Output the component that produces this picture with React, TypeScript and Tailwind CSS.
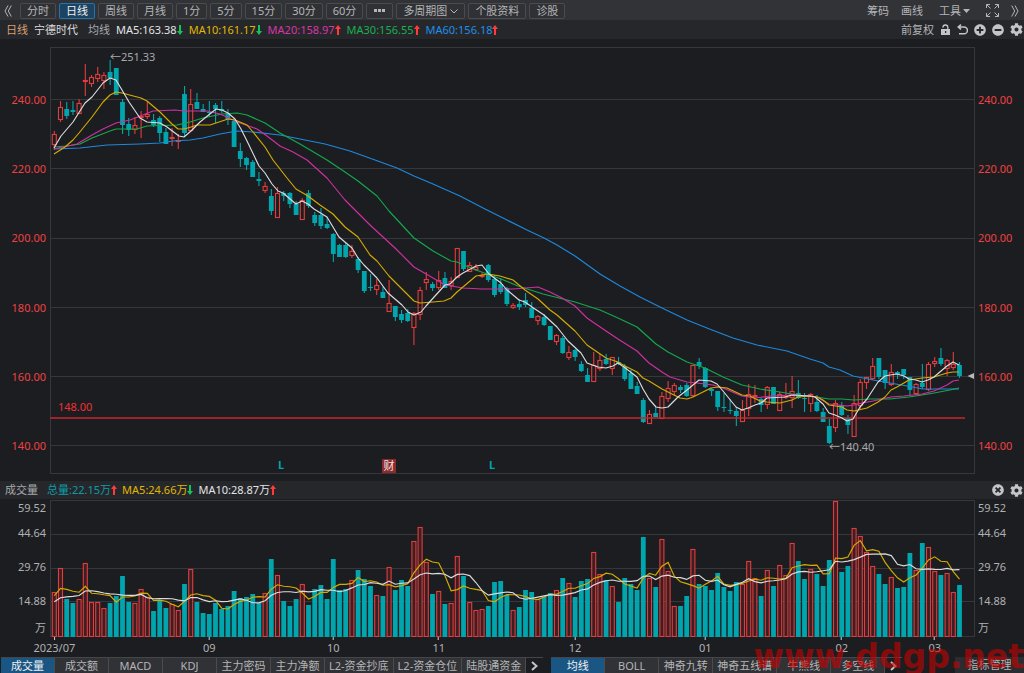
import { useState } from "react";
import { FaCog, FaMinusCircle, FaPlusCircle, FaTimesCircle } from "react-icons/fa";
import clsx from "clsx";

// [high, body top, body bottom, low, volume top], all in chart units (y grows downwards)
type Candle = [up: 0 | 1, high: number, top: number, bottom: number, low: number, volume: number];
type Point = [number, number];

const CANDLES: Candle[] = [
  [1, 131, 134, 145, 150, 592], [1, 101, 107, 120, 122, 568], [0, 102, 109, 116, 119, 599],
  [0, 101, 110, 112, 115, 603], [1, 99, 103, 114, 114, 599], [1, 64, 80, 82, 96, 563],
  [1, 75, 77, 84, 87, 602], [1, 67, 74, 79, 82, 602], [1, 72, 75, 81, 89, 608],
  [0, 60, 72, 78, 85, 603], [0, 68, 68, 95, 95, 596], [0, 99, 102, 125, 134, 576],
  [0, 118, 124, 130, 136, 602], [1, 117, 125, 130, 134, 603], [1, 111, 116, 118, 138, 589],
  [1, 102, 114, 117, 119, 597], [0, 114, 120, 125, 127, 611], [0, 116, 118, 133, 142, 601],
  [0, 128, 132, 144, 144, 608], [1, 128, 137, 139, 146, 604], [1, 134, 140, 142, 149, 610],
  [0, 86, 94, 133, 137, 584], [1, 89, 104, 131, 132, 569], [0, 93, 102, 109, 109, 602],
  [0, 104, 109, 112, 112, 613], [0, 101, 112, 113, 117, 614], [0, 103, 105, 109, 123, 603],
  [0, 101, 109, 111, 113, 609], [0, 109, 113, 119, 125, 606], [0, 120, 121, 147, 147, 591],
  [0, 143, 151, 159, 167, 598], [0, 157, 158, 165, 170, 597], [0, 160, 162, 177, 177, 594],
  [0, 172, 179, 181, 186, 603], [1, 182, 186, 191, 193, 593], [0, 189, 196, 211, 215, 559],
  [1, 187, 193, 218, 218, 575], [0, 191, 193, 196, 201, 601], [0, 192, 193, 204, 208, 606],
  [0, 201, 204, 215, 215, 599], [1, 198, 200, 220, 220, 584], [0, 190, 193, 206, 208, 605],
  [0, 212, 215, 223, 226, 589], [0, 208, 215, 226, 229, 585], [0, 217, 224, 228, 229, 599],
  [0, 233, 234, 254, 262, 559], [0, 244, 245, 257, 257, 590], [0, 243, 245, 257, 258, 589],
  [1, 245, 251, 256, 258, 580], [0, 257, 259, 270, 273, 570], [0, 271, 271, 291, 293, 579],
  [0, 274, 287, 288, 291, 586], [1, 279, 285, 290, 295, 595], [0, 287, 292, 298, 298, 596],
  [1, 280, 303, 312, 312, 567], [0, 306, 306, 317, 321, 590], [0, 310, 314, 320, 323, 580],
  [0, 309, 313, 321, 322, 586], [1, 312, 313, 328, 345, 541], [1, 287, 290, 315, 320, 527],
  [1, 272, 279, 283, 290, 562], [0, 282, 284, 288, 291, 594], [1, 271, 280, 288, 290, 591],
  [0, 272, 278, 288, 288, 604], [1, 277, 281, 286, 290, 603], [1, 248, 248, 278, 278, 556],
  [0, 251, 251, 269, 271, 576], [1, 262, 265, 272, 272, 602], [1, 264, 267, 270, 271, 610],
  [1, 273, 275, 277, 278, 609], [0, 264, 265, 280, 282, 606], [0, 275, 279, 295, 297, 582],
  [0, 278, 284, 292, 294, 581], [0, 287, 288, 304, 306, 595], [1, 303, 305, 308, 309, 610],
  [0, 299, 304, 307, 310, 607], [0, 293, 300, 305, 307, 590], [0, 302, 308, 318, 318, 592],
  [1, 315, 316, 321, 325, 599], [0, 314, 317, 325, 326, 597], [0, 326, 326, 340, 340, 593],
  [1, 334, 335, 342, 345, 590], [0, 336, 338, 353, 354, 578], [1, 346, 352, 358, 360, 583],
  [0, 349, 350, 357, 361, 597], [0, 361, 364, 371, 372, 581], [0, 368, 375, 382, 382, 579],
  [1, 352, 365, 382, 382, 552], [1, 354, 360, 369, 371, 574], [0, 354, 359, 364, 365, 580],
  [1, 357, 357, 369, 375, 586], [0, 357, 362, 364, 365, 602], [0, 364, 367, 379, 381, 578],
  [0, 370, 373, 389, 389, 584], [0, 382, 386, 394, 394, 590], [0, 398, 400, 422, 423, 537],
  [1, 410, 414, 424, 424, 578], [0, 407, 413, 417, 417, 587], [1, 392, 396, 419, 419, 539],
  [1, 381, 388, 399, 402, 571], [1, 383, 385, 392, 396, 606], [0, 385, 387, 390, 393, 606],
  [0, 383, 385, 396, 397, 596], [1, 365, 365, 396, 397, 549], [0, 358, 362, 366, 369, 584],
  [0, 367, 368, 387, 388, 586], [0, 388, 389, 391, 396, 590], [0, 391, 391, 407, 411, 573],
  [0, 393, 407, 408, 412, 587], [0, 399, 410, 411, 414, 591], [0, 407, 411, 416, 426, 582],
  [1, 400, 410, 422, 422, 584], [1, 384, 394, 409, 416, 561], [1, 385, 395, 397, 403, 578],
  [0, 398, 399, 405, 412, 596], [1, 386, 387, 405, 409, 570], [0, 387, 387, 404, 404, 586],
  [1, 392, 394, 411, 411, 565], [1, 383, 396, 398, 399, 575], [1, 376, 391, 398, 408, 543],
  [0, 380, 393, 398, 399, 561], [0, 393, 398, 399, 412, 579], [1, 393, 394, 404, 412, 569],
  [0, 395, 402, 411, 412, 574], [0, 408, 412, 422, 422, 586], [0, 419, 426, 443, 444, 560],
  [1, 400, 403, 428, 432, 501], [0, 402, 405, 415, 416, 572], [0, 415, 418, 425, 434, 566],
  [1, 395, 403, 437, 437, 528], [1, 379, 382, 406, 409, 536], [1, 377, 377, 383, 389, 552],
  [1, 358, 366, 379, 380, 566], [0, 358, 358, 377, 379, 574], [0, 370, 370, 383, 389, 584],
  [1, 364, 372, 385, 386, 577], [0, 371, 372, 374, 379, 588], [0, 369, 369, 375, 379, 587],
  [0, 377, 377, 390, 395, 553], [1, 383, 384, 394, 395, 570], [0, 364, 383, 387, 389, 543],
  [1, 362, 364, 390, 391, 547], [1, 357, 361, 364, 367, 571], [0, 348, 358, 364, 366, 575],
  [1, 359, 360, 369, 376, 573], [1, 352, 364, 368, 370, 592], [0, 362, 365, 376, 378, 585],
];

// volumes of the nine days before the first visible candle
const EARLIER_VOLUMES = [608, 608, 608, 608, 608, 604, 594, 594, 594];

const PRICE_LINES = [
  {
    color: "#1e88dc",
    points:
      "54,149 80,148 107,145 140,144 160,143 173,141 190,140 203,138 220,134 237,131 253,132 280,135 300,139 325,144 350,151 375,160 397,168 414,176 433,184 460,196 485,209 507,220 527,230 544,238 557,245 575,256 600,274 620,286 640,297 660,307 687,320 712,330 733,338 757,345 787,351 810,359 823,363 829,367 840,370 853,376 873,380 890,383 907,386 923,389 940,389 959,389",
  },
  {
    color: "#14a84c",
    points:
      "54,147 67,146 80,144 92,138 110,131 116,129 137,129 147,126 177,125 190,122 203,118 222,114 237,113 247,115 265,123 280,133 300,144 327,160 345,172 358,181 377,196 389,211 414,238 433,251 451,261 457,262 476,270 501,279 518,286 543,294 575,302 600,310 618,318 637,327 656,344 668,352 687,362 705,368 723,377 742,385 760,389 780,392 803,396 817,397 829,399 842,399 854,400 870,399 890,399 909,397 922,395 934,393 950,390 959,388",
  },
  {
    color: "#cf30a0",
    points:
      "54,149 77,144 92,135 103,129 116,123 130,120 153,111 175,110 184,111 207,111 220,114 240,123 257,129 267,136 280,146 293,152 307,160 327,178 345,200 370,225 395,248 414,267 433,278 445,285 451,286 463,288 482,289 513,289 538,287 550,292 562,298 575,306 587,318 606,331 618,339 637,351 649,363 662,372 670,377 687,382 697,383 713,385 723,388 742,396 755,398 772,396 792,395 810,396 817,397 829,404 847,406 854,405 862,403 873,401 891,397 904,396 922,394 934,391 947,385 953,381 959,380",
  },
  {
    color: "#d4ac00",
    points:
      "54,154 65,147 73,140 79,133 92,117 103,102 110,95 116,92 122,93 141,98 147,101 160,112 172,124 178,129 184,129 191,127 197,125 210,125 216,123 228,119 235,120 247,125 253,132 265,147 273,160 287,178 296,189 308,196 320,205 333,214 345,227 358,237 370,255 377,261 389,276 402,289 414,301 420,303 433,302 444,301 451,298 457,292 476,276 488,274 500,276 513,280 525,290 538,299 550,310 557,315 575,331 587,345 606,358 618,362 625,366 637,372 643,378 649,381 662,389 680,398 687,399 693,397 705,391 711,388 718,387 727,388 742,395 750,396 760,401 767,402 780,403 792,400 798,397 810,396 817,397 823,400 829,405 842,407 847,410 854,411 867,408 878,402 885,397 891,390 897,387 909,380 922,378 934,377 947,373 953,372 959,372",
  },
  {
    color: "#dcdcde",
    points:
      "54,148 61,136 73,122 85,103 92,97 103,83 110,78 116,80 122,90 129,102 140,118 147,122 160,123 167,127 179,136 184,137 191,131 200,122 216,109 222,110 228,113 235,119 241,129 247,141 259,166 265,173 272,184 278,191 283,193 296,204 302,201 308,204 314,209 327,217 339,237 352,248 358,258 364,265 377,278 388,293 402,305 408,312 414,315 421,312 426,306 435,296 445,285 450,284 457,277 463,273 476,266 482,265 489,274 501,283 507,290 519,300 525,302 532,307 544,315 557,327 568,341 581,353 587,363 598,367 606,368 613,366 618,363 624,367 637,377 643,389 649,399 656,407 662,408 668,407 678,397 687,390 699,380 711,381 717,384 723,391 736,407 742,410 748,408 755,405 761,403 767,398 785,397 792,395 810,396 815,397 823,404 829,413 835,415 842,418 847,421 853,419 860,407 867,399 878,382 885,376 890,375 897,374 904,376 909,379 916,380 922,382 928,380 934,377 941,371 947,366 953,362 959,365",
  },
];

const LEFT = 50;
const WIDTH = 925;
const UP = "#e23c3c";
const DOWN = "#00a5ae";

const candleX = (i: number) => 54.3 + i * 6.2;
const percent = (x: number) => `${((x - LEFT) / WIDTH) * 100}%`;

function movingAverage(days: number): string {
  const all = [...EARLIER_VOLUMES, ...CANDLES.map((c) => c[5])];
  return CANDLES.map((_, i): Point => {
    const end = i + EARLIER_VOLUMES.length + 1;
    const sum = all.slice(end - days, end).reduce((a, b) => a + b, 0);
    return [candleX(i), sum / days];
  })
    .map(([x, y]) => `${x.toFixed(1)},${y.toFixed(1)}`)
    .join(" ");
}

function PricePlot() {
  return (
    <svg
      className="block h-[427px] w-full"
      viewBox={`${LEFT} 47 ${WIDTH} 427`}
      preserveAspectRatio="none"
      role="img"
      aria-label="日线"
    >
      {[99.5, 168.5, 238.5, 307.5, 376.5, 445.5].map((y) => (
        <line key={y} x1={50} x2={974} y1={y} y2={y} stroke="#36373b" />
      ))}
      <rect x={50.5} y={47.5} width={924} height={426} fill="none" stroke="#36373b" />
      {CANDLES.map(([up, high, top, bottom, low], i) => {
        const x = candleX(i);
        const height = Math.max(bottom - top, 1);
        return up ? (
          <g key={i} stroke={UP} fill="none">
            <path d={`M${x} ${high}V${top}M${x} ${bottom}V${low}`} strokeWidth={1.1} />
            <rect x={x - 2} y={top + 0.5} width={4} height={Math.max(height - 1, 1)} strokeWidth={1.1} />
          </g>
        ) : (
          <g key={i} fill={DOWN}>
            <rect x={x - 0.5} y={high} width={1.1} height={low - high} />
            <rect x={x - 2.4} y={top} width={4.8} height={height} />
          </g>
        );
      })}
      <line x1={50} x2={965} y1={418} y2={418} stroke="#c4292c" strokeWidth={1.4} />
      {PRICE_LINES.map((line) => (
        <polyline
          key={line.color}
          points={line.points}
          fill="none"
          stroke={line.color}
          strokeWidth={1.15}
          strokeLinejoin="round"
        />
      ))}
      <path d="M967.5 376L974 373V379Z" fill="#b8b8ba" />
    </svg>
  );
}

function VolumePlot() {
  return (
    <svg
      className="block h-[137px] w-full"
      viewBox={`${LEFT} 500 ${WIDTH} 137`}
      preserveAspectRatio="none"
      role="img"
      aria-label="成交量"
    >
      {[534.5, 568.5, 601.5].map((y) => (
        <line key={y} x1={50} x2={974} y1={y} y2={y} stroke="#36373b" />
      ))}
      <rect x={50.5} y={500.5} width={924} height={136} fill="none" stroke="#36373b" />
      {CANDLES.map(([up, , , , , top], i) =>
        up ? (
          <rect
            key={i}
            x={candleX(i) - 2}
            y={top + 0.5}
            width={4}
            height={636 - top}
            fill="#3c1f23"
            stroke={UP}
            strokeWidth={1.1}
          />
        ) : (
          <rect key={i} x={candleX(i) - 2.4} y={top} width={4.8} height={637 - top} fill={DOWN} />
        ),
      )}
      <polyline points={movingAverage(5)} fill="none" stroke="#d4ac00" strokeWidth={1.15} />
      <polyline points={movingAverage(10)} fill="none" stroke="#dcdcde" strokeWidth={1.15} />
    </svg>
  );
}

function Arrow({ up }: { up: boolean }) {
  return (
    <svg
      className={clsx("h-[10px] w-[6px]", up ? "text-[#ff3b3b]" : "rotate-180 text-[#12c45a]")}
      viewBox="0 0 6 10"
      aria-hidden="true"
    >
      <path d="M3 0L6 4H4V10H2V4H0Z" fill="currentColor" />
    </svg>
  );
}

function Reading({ text, up, className }: { text: string; up: boolean; className: string }) {
  return (
    <span className={clsx("flex items-center", className)}>
      {text}
      <Arrow up={up} />
    </span>
  );
}

function DoubleChevron({ left }: { left?: boolean }) {
  return (
    <svg className={clsx("h-3 w-2", !left && "rotate-180")} viewBox="0 0 8 12" aria-hidden="true">
      <path d="M4 0.5L1 6L4 11.5M7.3 0.5L4.3 6L7.3 11.5" fill="none" stroke="currentColor" />
    </svg>
  );
}

const PERIODS = ["分时", "日线", "周线", "月线", "1分", "5分", "15分", "30分", "60分"];

const toolButton = "flex h-4 items-center rounded-xs border px-[6px]";
const plainButton = "border-[#4a4b4f] bg-[#303135]";

function Toolbar() {
  const [period, setPeriod] = useState("日线");
  return (
    <header className="flex h-5 items-center justify-between bg-[#323337] pt-px pr-[5px] pl-1 text-[#b4b5b7]">
      <div className="flex items-center gap-[3px]">
        <button aria-label="向左" className="mr-[5px]">
          <DoubleChevron left />
        </button>
        {PERIODS.map((name) => (
          <button
            key={name}
            onClick={() => setPeriod(name)}
            className={clsx(
              toolButton,
              name === period ? "border-[#2374ac] bg-[#1c4361] text-[#f0f0f0]" : plainButton,
            )}
          >
            {name}
          </button>
        ))}
        <button aria-label="更多" className={clsx(toolButton, plainButton)}>
          <svg className="h-[3px] w-[13px]" viewBox="0 0 13 3" fill="currentColor">
            <path d="M1 0H4V3H1ZM5 0H8V3H5ZM9 0H12V3H9Z" />
          </svg>
        </button>
        <button className={clsx(toolButton, plainButton, "gap-[3px]")}>
          多周期图
          <svg className="h-2 w-2" viewBox="0 0 8 8" fill="none" stroke="currentColor">
            <path d="M0.5 2.5L4 6L7.5 2.5" />
          </svg>
        </button>
        <button className={clsx(toolButton, plainButton)}>个股资料</button>
        <button className={clsx(toolButton, plainButton)}>诊股</button>
      </div>
      <div className="flex items-center">
        <button className="mr-3">筹码</button>
        <button className="mr-4">画线</button>
        <button className="mr-4 flex items-center gap-[2px]">
          工具
          <svg className="h-1 w-[7px]" viewBox="0 0 7 4" fill="currentColor">
            <path d="M0 0H7L3.5 4Z" />
          </svg>
        </button>
        <button aria-label="全屏" className="mr-3">
          <svg className="h-[13px] w-[13px]" viewBox="0 0 13 13" fill="none" stroke="currentColor">
            <path d="M0.5 4V0.5H4M0.5 0.5L4.5 4.5M9 0.5H12.5V4M12.5 0.5L8.5 4.5M0.5 9V12.5H4M0.5 12.5L4.5 8.5M12.5 9V12.5H9M12.5 12.5L8.5 8.5" />
          </svg>
        </button>
        <button aria-label="向右">
          <DoubleChevron />
        </button>
      </div>
    </header>
  );
}

function PriceHeader() {
  return (
    <div className="flex h-[19px] items-center justify-between bg-[#26272b] pr-px pl-[6px]">
      <div className="flex items-center gap-[6px]">
        <span className="text-[#d8a070]">日线</span>
        <span className="mr-1 text-[#dcdcde]">宁德时代</span>
        <span className="text-[#a8a9ab]">均线</span>
        <Reading text="MA5:163.38" up={false} className="text-[#e4e4e6]" />
        <Reading text="MA10:161.17" up={false} className="text-[#e0b800]" />
        <Reading text="MA20:158.97" up className="text-[#d835a8]" />
        <Reading text="MA30:156.55" up className="text-[#18b050]" />
        <Reading text="MA60:156.18" up className="text-[#2090e8]" />
      </div>
      <div className="flex items-center gap-[6px] text-[#c4c5c7]">
        <button className="text-[#b4b5b7]">前复权</button>
        <button aria-label="锁定">
          <svg className="h-[11px] w-[11px]" viewBox="0 0 11 11">
            <path d="M3 3.6A2.4 2.4 0 0 1 7.8 3.2V5" fill="none" stroke="currentColor" strokeWidth="1.3" />
            <path d="M1 5H10V11H1ZM5 7V9H6.2V7Z" fill="currentColor" fillRule="evenodd" />
          </svg>
        </button>
        <button aria-label="撤销">
          <svg
            className="h-[11px] w-[11px]"
            viewBox="0 0 11 11"
            fill="none"
            stroke="currentColor"
            strokeWidth="1.5"
          >
            <path d="M4 0.6L1.2 3L4 5.4M1.2 3H7A3.3 3.3 0 0 1 7 9.8H2" />
          </svg>
        </button>
        <button aria-label="放大">
          <FaPlusCircle size={12} />
        </button>
        <button aria-label="缩小">
          <FaMinusCircle size={12} />
        </button>
        <button aria-label="设置">
          <FaCog size={13} />
        </button>
      </div>
    </div>
  );
}

function PriceAxis({ className }: { className: string }) {
  return (
    <div
      className={clsx(
        "flex shrink-0 flex-col justify-between pt-[45px] pb-5 text-[#ee4242]",
        className,
      )}
    >
      {["240.00", "220.00", "200.00", "180.00", "160.00", "140.00"].map((label) => (
        <span key={label}>{label}</span>
      ))}
    </div>
  );
}

function VolumeAxis({ className }: { className: string }) {
  return (
    <div className={clsx("flex shrink-0 flex-col text-[#b0b1b3]", className)}>
      <span className="leading-4">59.52</span>
      {["44.64", "29.76", "14.88"].map((label) => (
        <span key={label} className="leading-[34px]">
          {label}
        </span>
      ))}
      <span className="leading-5">万</span>
    </div>
  );
}

const MONTHS: { label: string; index: number }[] = [
  { label: "2023/07", index: 0 },
  { label: "09", index: 25 },
  { label: "10", index: 45 },
  { label: "11", index: 62 },
  { label: "12", index: 84 },
  { label: "01", index: 105 },
  { label: "02", index: 127 },
  { label: "03", index: 142 },
];

function TimeAxis() {
  return (
    <div className="relative mr-[49px] ml-[50px] h-5 text-[#b0b1b3]">
      {MONTHS.map(({ label, index }) => (
        <div
          key={label}
          className="absolute top-0 flex -translate-x-1/2 flex-col items-center"
          style={{ left: percent(candleX(index)) }}
        >
          <i className="h-[3px] w-px bg-[#d0d0d2]" />
          <span>{label}</span>
        </div>
      ))}
    </div>
  );
}

const INDICATORS = [
  "成交量", "成交额", "MACD", "KDJ", "主力密码", "主力净额", "L2-资金抄底", "L2-资金仓位", "陆股通资金",
];
const OVERLAYS = ["均线", "BOLL", "神奇九转", "神奇五线谱", "牛熊线", "多空线"];

function TabGroup({ names }: { names: string[] }) {
  const [active, setActive] = useState(names[0]);
  return (
    <div className="flex items-center border-t border-[#45464a]">
      {names.map((name) => (
        <button
          key={name}
          onClick={() => setActive(name)}
          className={clsx(
            "h-[15px] min-w-[54px] border-r border-[#4a4b4f] px-1 whitespace-nowrap",
            name === active ? "bg-[#1a5684] text-[#f0f0f0]" : "bg-[#313236] text-[#b4b5b7]",
          )}
        >
          {name}
        </button>
      ))}
      <button aria-label="更多指标" className="px-[5px] text-[#c4c5c7]">
        <svg className="h-[10px] w-[7px]" viewBox="0 0 7 10" fill="none" stroke="currentColor" strokeWidth="2">
          <path d="M1 1L5.5 5L1 9" />
        </svg>
      </button>
    </div>
  );
}

export default function App() {
  return (
    <div className="relative min-h-screen overflow-hidden bg-[#1c1d21] font-['Noto_Sans','Noto_Sans_CJK_SC',sans-serif] text-[11px] leading-4">
      <Toolbar />
      <PriceHeader />

      <main>
        <section className="flex pt-2 pb-[7px]">
          <PriceAxis className="w-[50px] pr-1 text-right" />
          <div className="relative min-w-0 flex-1">
            <PricePlot />
            <span className="absolute top-[2px] text-[#a8a9ab]" style={{ left: percent(110) }}>
              ←251.33
            </span>
            <span className="absolute top-[392px] text-[#a8a9ab]" style={{ left: percent(829) }}>
              ←140.40
            </span>
            <span className="absolute top-[352px] text-[#f03030]" style={{ left: percent(58) }}>
              148.00
            </span>
            <span className="absolute top-[410px] font-bold text-[#00a5ae]" style={{ left: percent(278) }}>
              L
            </span>
            <span className="absolute top-[410px] font-bold text-[#00a5ae]" style={{ left: percent(489) }}>
              L
            </span>
            <span
              className="absolute top-[412px] h-[14px] w-[14px] bg-[#8c2a2c] text-center leading-[14px] text-[#f0e0e0]"
              style={{ left: percent(382) }}
            >
              财
            </span>
          </div>
          <PriceAxis className="w-[49px] pl-[3px]" />
        </section>

        <section>
          <div className="flex h-[18px] items-center justify-between bg-[#26272b] pr-px pl-[5px]">
            <div className="flex items-center gap-[5px]">
              <h2 className="mr-1 text-[#a8a9ab]">成交量</h2>
              <Reading text="总量:22.15万" up className="text-[#0d9ca6]" />
              <Reading text="MA5:24.66万" up={false} className="text-[#e0b800]" />
              <Reading text="MA10:28.87万" up className="text-[#e4e4e6]" />
            </div>
            <div className="flex items-center gap-[6px] text-[#c4c5c7]">
              <button aria-label="关闭">
                <FaTimesCircle size={12} />
              </button>
              <button aria-label="设置成交量">
                <FaCog size={13} />
              </button>
            </div>
          </div>
          <div className="flex pt-px">
            <VolumeAxis className="-mb-px w-[50px] pr-1 text-right" />
            <div className="min-w-0 flex-1">
              <VolumePlot />
            </div>
            <VolumeAxis className="-mb-px w-[49px] pl-[3px]" />
          </div>
          <TimeAxis />
        </section>
      </main>

      <footer className="flex h-4 items-center justify-between pl-px">
        <div className="flex gap-2">
          <TabGroup names={INDICATORS} />
          <TabGroup names={OVERLAYS} />
        </div>
        <button className="h-4 w-[69px] shrink-0 bg-[#2b2c30] text-[#b4b5b7]">指标管理</button>
      </footer>

      <div className="pointer-events-none absolute right-0 bottom-0 font-['DejaVu_Sans',sans-serif] text-[33px] leading-8 font-bold text-[#c80000]/60">
        www.ddgp.net
      </div>
    </div>
  );
}
